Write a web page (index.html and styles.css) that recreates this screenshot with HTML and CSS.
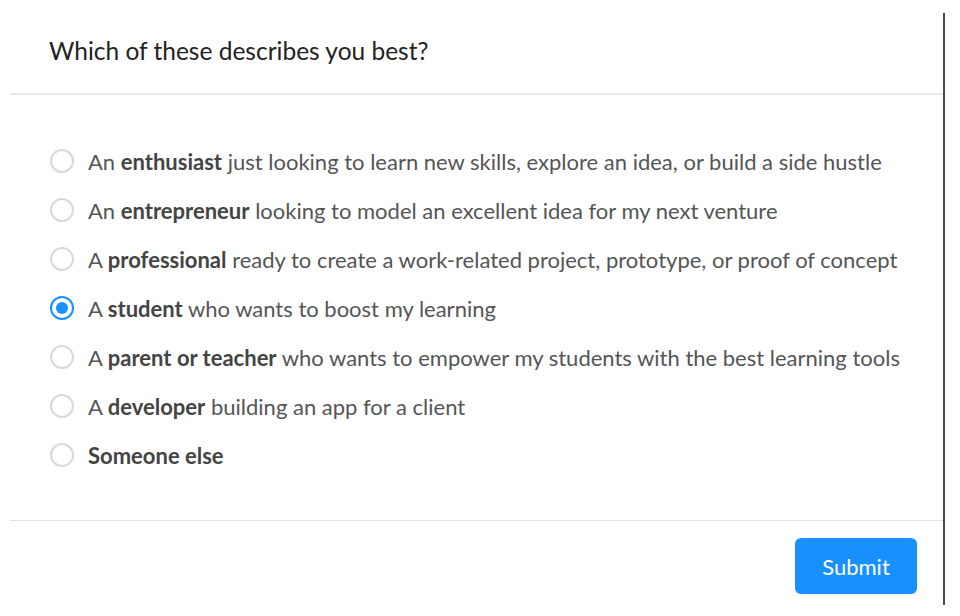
FILE: index.html
```html
<!DOCTYPE html>
<html>
<head>
<meta charset="utf-8">
<link rel="stylesheet" href="styles.css">
</head>
<body>
<div class="frame">
  <div class="panel">
    <div class="header">Which of these describes you best?</div>
    <div class="options">
      <label class="opt"><span class="radio"></span><span class="txt">An <b>enthusiast</b> just looking to learn new skills, explore an idea, or build a side hustle</span></label>
      <label class="opt"><span class="radio"></span><span class="txt">An <b>entrepreneur</b> looking to model an excellent idea for my next venture</span></label>
      <label class="opt"><span class="radio"></span><span class="txt">A <b>professional</b> ready to create a work-related project, prototype, or proof of concept</span></label>
      <label class="opt"><span class="radio checked"></span><span class="txt">A <b>student</b> who wants to boost my learning</span></label>
      <label class="opt"><span class="radio"></span><span class="txt">A <b>parent or teacher</b> who wants to empower my students with the best learning tools</span></label>
      <label class="opt"><span class="radio"></span><span class="txt">A <b>developer</b> building an app for a client</span></label>
      <label class="opt"><span class="radio"></span><span class="txt"><b>Someone else</b></span></label>
    </div>
    <div class="footer"><button class="submit">Submit</button></div>
  </div>
</div>
</body>
</html>
```
FILE: styles.css
```css
html, body { margin: 0; padding: 0; background: #fff; }
body { width: 960px; height: 616px; overflow: hidden; font-family: Lato, "Noto Sans", sans-serif; }
.frame {
  margin-top: 13px;
  width: 943px;
  height: 592px;
  border-right: 2px solid #4a4a4a;
}
.panel { margin-left: 10px; display: flex; flex-direction: column; }
.header {
  height: 82px;
  box-sizing: border-box;
  padding: 23px 0 0 39px;
  font-size: 24.5px;
  color: #222;
  border-bottom: 2px solid #e8e8e8;
}
.options {
  display: flex;
  flex-direction: column;
  gap: 25px;
  padding: 54px 0 53px 40px;
  border-bottom: 1px solid #e4e4e4;
}
.opt { display: flex; align-items: center; height: 24px; gap: 14px; font-size: 22px; color: #555; }
.opt b { color: #444; font-weight: 700; }
.radio {
  width: 24px; height: 24px; box-sizing: border-box;
  border: 2px solid #d9d9d9; border-radius: 50%; flex: none;
  display: flex; align-items: center; justify-content: center;
}
.radio.checked { border-color: #1890ff; }
.radio.checked::after { content: ""; width: 12px; height: 12px; border-radius: 50%; background: #1890ff; }
.footer { display: flex; justify-content: flex-end; padding: 17px 26px 0 0; }
.submit {
  width: 122px; height: 56px;
  background: #1890ff; color: #fff; border: none; border-radius: 6px;
  font-family: Lato, "Noto Sans", sans-serif; font-size: 22px;
  box-shadow: 0 2px 0 rgba(0,0,0,0.04);
}
```
